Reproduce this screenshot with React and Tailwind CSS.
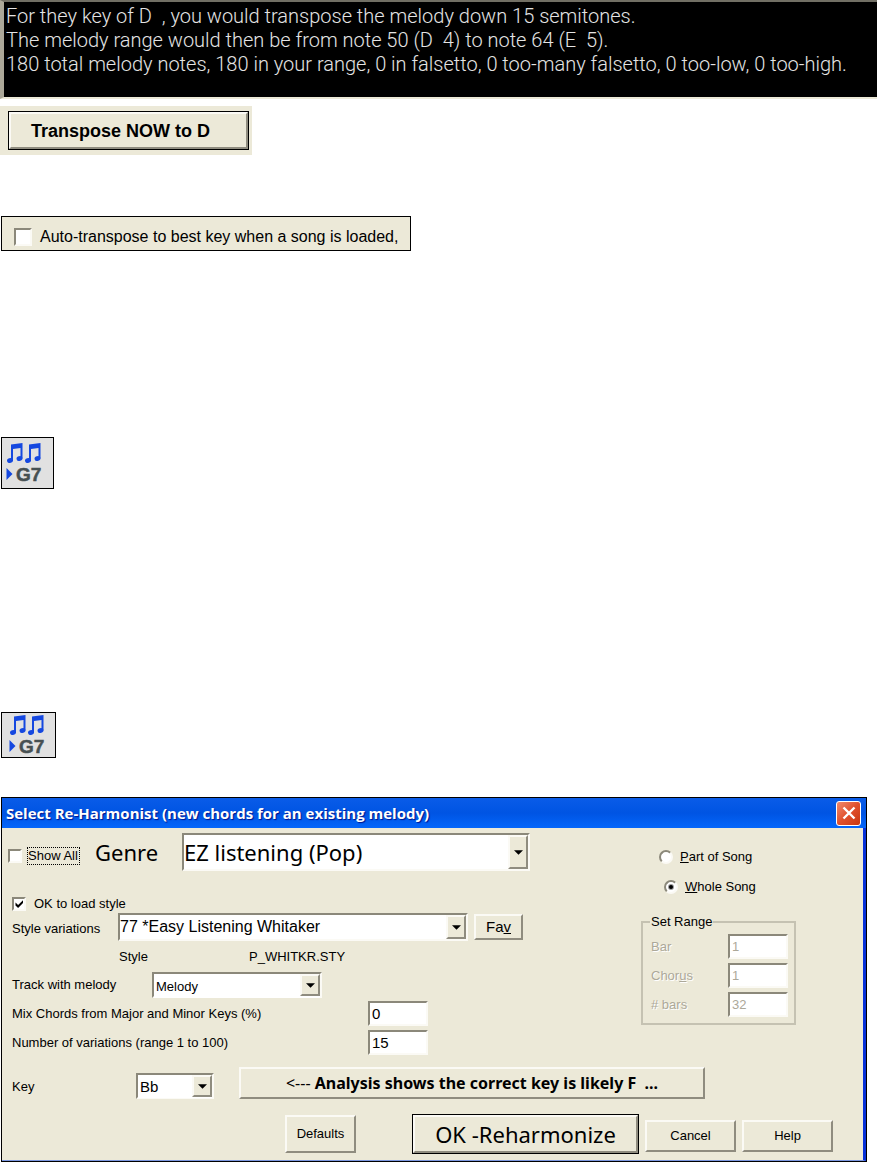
import React, { useState } from "react";
import clsx from "clsx";

const RAISED =
  "border-2 border-t-[#fbfaf5] border-l-[#fbfaf5] border-b-[#8f8c7f] border-r-[#8f8c7f] bg-[#ece9d8]";
const SUNKEN =
  "border-2 border-t-[#8b887a] border-l-[#8b887a] border-b-[#fbfaf5] border-r-[#fbfaf5] bg-white";

const LABEL = "text-[13px] leading-4 whitespace-pre";

function Checkbox({ checked, onChange, id, large }) {
  const size = large ? "h-[18px] w-[18px]" : "h-[14px] w-[14px]";

  return (
    <span className={clsx("relative inline-flex shrink-0", size)}>
      <input
        id={id}
        type="checkbox"
        checked={checked}
        onChange={(e) => onChange(e.target.checked)}
        className={clsx("appearance-none", size, SUNKEN)}
      />
      {checked ? (
        <svg
          viewBox="0 0 14 14"
          className={clsx("pointer-events-none absolute inset-0", size)}
        >
          <path d="M3.5 5.5v3l2.6 2.6 4.9-5V3.2l-4.900 4.900z" fill="#000" />
        </svg>
      ) : null}
    </span>
  );
}

function Radio({ id, checked, onChange }) {
  return (
    <span className="relative inline-flex h-[14px] w-[14px] shrink-0">
      <input
        id={id}
        type="radio"
        name="songPart"
        checked={checked}
        onChange={onChange}
        className={clsx("h-[14px] w-[14px] appearance-none rounded-full", SUNKEN)}
      />
      {checked ? (
        <span className="pointer-events-none absolute top-[5px] left-[5px] h-1 w-1 rounded-full bg-black ring-1 ring-black/40" />
      ) : null}
    </span>
  );
}

function ComboBox({ id, value, options, onChange, className, textClass }) {
  return (
    <div className={clsx("relative shrink-0", SUNKEN, className)}>
      <select
        id={id}
        value={value}
        onChange={(e) => onChange(e.target.value)}
        className={clsx("h-full w-full appearance-none bg-white text-black", textClass)}
      >
        {options.map((o) => (
          <option key={o} value={o}>
            {o}
          </option>
        ))}
      </select>
      <span
        className={clsx(
          "pointer-events-none absolute inset-y-0 right-0 flex w-5 items-center justify-center",
          RAISED,
        )}
      >
        <svg viewBox="0 0 10 5" className="h-[5px] w-[9px]">
          <path d="M0 0h10L5 5z" fill="#000" />
        </svg>
      </span>
    </div>
  );
}

function NumberBox({ id, value, onChange, disabled }) {
  return (
    <input
      id={id}
      type="text"
      value={value}
      disabled={disabled}
      onChange={(e) => onChange?.(e.target.value)}
      className={clsx(
        "h-[25px] w-[60px] shrink-0 pl-0.5",
        SUNKEN,
        disabled ? "text-[13px] text-[#aca899]" : "text-[15px] text-black",
      )}
    />
  );
}

function PushButton({ className, children }) {
  return (
    <button type="button" className={clsx("shrink-0 whitespace-pre", RAISED, className)}>
      {children}
    </button>
  );
}

function ReharmonizeButton({ className }) {
  return (
    <button
      type="button"
      aria-label="Reharmonize"
      className={clsx("flex items-center border border-black bg-[#e1e1e1]", className)}
    >
      <svg viewBox="0 0 40 42" className="h-[42px] w-10">
        <g fill="#1548e0">
          <path d="M7 2.500 18.500 1v15.500h-2V6L9 7v12H7z" />
          <ellipse cx="6" cy="18.500" rx="3" ry="2.400" transform="rotate(-20 6 18.500)" />
          <ellipse cx="15.500" cy="16.500" rx="3" ry="2.400" transform="rotate(-20 15.500 16.500)" />
          <path d="M25 2.500 36.500 1v15.500h-2V6L27 7v12h-2z" />
          <ellipse cx="24" cy="18.500" rx="3" ry="2.400" transform="rotate(-20 24 18.500)" />
          <ellipse cx="33.500" cy="16.500" rx="3" ry="2.400" transform="rotate(-20 33.500 16.500)" />
          <path d="M2.500 26v12l6-6z" />
        </g>
        <text
          x="12"
          y="39"
          fontFamily="Liberation Sans, Arial, sans-serif"
          fontSize="19"
          fontWeight="700"
          fill="#465052"
          stroke="#465052"
          strokeWidth="0.500"
        >
          G7
        </text>
      </svg>
    </button>
  );
}

function RangeRow({ id, label, value }) {
  return (
    <div className="flex items-center justify-between">
      <label
        htmlFor={id}
        className={clsx(LABEL, "text-[#aca899] [text-shadow:1px_1px_0_#fff]")}
      >
        {label}
      </label>
      <NumberBox id={id} value={value} disabled />
    </div>
  );
}

function ReHarmonistDialog() {
  const [showAll, setShowAll] = useState(false);
  const [loadStyle, setLoadStyle] = useState(true);
  const [genre, setGenre] = useState("EZ listening (Pop)");
  const [style, setStyle] = useState("77 *Easy Listening Whitaker");
  const [track, setTrack] = useState("Melody");
  const [mix, setMix] = useState("0");
  const [variations, setVariations] = useState("15");
  const [key, setKey] = useState("Bb");
  const [part, setPart] = useState("whole");

  return (
    <section className="mr-[10px] ml-px border border-black bg-[#ece9d8]">
      <header className="flex h-[30px] items-center justify-between bg-linear-to-b from-[#0a5ce8] via-[#0054e3] to-[#0466fb] pr-[5px] pl-1">
        <h1 className="font-['Open_Sans',sans-serif] text-[15px] leading-5 font-bold whitespace-pre text-white [text-shadow:1px_1px_1px_#00138c]">
          Select Re-Harmonist (new chords for an existing melody)
        </h1>
        <button
          type="button"
          aria-label="Close"
          className="flex h-[25px] w-[25px] items-center justify-center rounded-[3px] border border-white bg-linear-to-br from-[#f0896c] via-[#e0502c] to-[#c8360e]"
        >
          <svg viewBox="0 0 14 14" className="h-[14px] w-[14px]">
            <path d="M1.500 1.500l11 11M12.500 1.500l-11 11" stroke="#fff" strokeWidth="2.400" />
          </svg>
        </button>
      </header>

      <div className="border-r-[3px] border-b border-r-[#0831d9] border-b-[#7a96df] pt-[5px] pb-[6px] pl-[10px]">
        <div className="flex justify-between pr-[67px]">
          <div>
            <div className="-ml-1 flex h-[38px] items-center">
              <div className="flex items-center gap-1.5 pt-2">
                <Checkbox id="showAll" checked={showAll} onChange={setShowAll} />
                <label
                  htmlFor="showAll"
                  className={clsx(LABEL, "w-[51px] outline-1 outline-dotted outline-black")}
                >
                  Show All
                </label>
              </div>
              <label
                htmlFor="genre"
                className="ml-4 w-[87px] font-['Noto_Sans',sans-serif] text-[22px] leading-7"
              >
                Genre
              </label>
              <ComboBox
                id="genre"
                value={genre}
                options={["EZ listening (Pop)"]}
                onChange={setGenre}
                className="h-[38px] w-[348px]"
                textClass="font-['Noto_Sans',sans-serif] text-[22px] leading-7"
              />
            </div>

            <div className="mt-6 flex h-[18px] items-center gap-2">
              <Checkbox id="loadStyle" checked={loadStyle} onChange={setLoadStyle} />
              <label htmlFor="loadStyle" className={LABEL}>
                OK to load style
              </label>
            </div>

            <div className="flex h-[28px] items-center">
              <label htmlFor="style" className={clsx(LABEL, "w-[106px] pt-1")}>
                Style variations
              </label>
              <ComboBox
                id="style"
                value={style}
                options={["77 *Easy Listening Whitaker"]}
                onChange={setStyle}
                className="h-[28px] w-[350px]"
                textClass="text-base leading-5"
              />
              <PushButton className="ml-1.5 h-[26px] w-[49px] text-[15px] leading-4">
                Fa<u>v</u>
              </PushButton>
            </div>

            <div className="flex h-[31px] items-center pl-[107px]">
              <span className={clsx(LABEL, "w-[130px]")}>Style</span>
              <span className={LABEL}>P_WHITKR.STY</span>
            </div>

            <div className="flex h-[26px] items-center">
              <label htmlFor="track" className={clsx(LABEL, "w-[140px]")}>
                Track with melody
              </label>
              <ComboBox
                id="track"
                value={track}
                options={["Melody"]}
                onChange={setTrack}
                className="h-[26px] w-[170px]"
                textClass="pl-0.5 text-[13px] leading-4"
              />
            </div>

            <div className="mt-[3px] flex items-center">
              <label htmlFor="mix" className={clsx(LABEL, "w-[356px]")}>
                Mix Chords from Major and Minor Keys (%)
              </label>
              <NumberBox id="mix" value={mix} onChange={setMix} />
            </div>
            <div className="mt-1 flex items-center">
              <label htmlFor="variations" className={clsx(LABEL, "w-[356px]")}>
                Number of variations (range 1 to 100)
              </label>
              <NumberBox id="variations" value={variations} onChange={setVariations} />
            </div>
          </div>

          <div className="w-[155px] pt-4">
            <div className="ml-[18px] flex items-center gap-[7px]">
              <Radio id="part" checked={part === "part"} onChange={() => setPart("part")} />
              <label htmlFor="part" className={LABEL}>
                <u>P</u>art of Song
              </label>
            </div>
            <div className="mt-[14px] ml-[23px] flex items-center gap-[7px]">
              <Radio id="whole" checked={part === "whole"} onChange={() => setPart("whole")} />
              <label htmlFor="whole" className={LABEL}>
                <u>W</u>hole Song
              </label>
            </div>
            <fieldset className="mt-[19px] border-2 border-[#c5c2b2] pr-1.5 pb-1.5 pl-2">
              <legend className={clsx(LABEL, "-ml-px px-px")}>Set Range</legend>
              <div className="flex flex-col gap-1 pt-1">
                <RangeRow id="bar" label="Bar" value="1" />
                <RangeRow
                  id="chorus"
                  label={
                    <>
                      Chor<u>u</u>s
                    </>
                  }
                  value="1"
                />
                <RangeRow id="bars" label="# bars" value="32" />
              </div>
            </fieldset>
          </div>
        </div>

        <div className="mt-3 flex items-end">
          <label htmlFor="key" className={clsx(LABEL, "w-[124px] pb-1")}>
            Key
          </label>
          <ComboBox
            id="key"
            value={key}
            options={["Bb"]}
            onChange={setKey}
            className="h-[26px] w-[78px]"
            textClass="pl-0.5 text-[15px] leading-4"
          />
          <PushButton className="ml-[25px] h-8 w-[466px] font-['Noto_Sans',sans-serif] text-base leading-5 font-bold">
            <span className="font-normal">{"<--- "}</span>
            {"Analysis shows the correct key is likely F  ..."}
          </PushButton>
        </div>

        <div className="mt-[15px] flex items-center justify-end pr-[30px]">
          <PushButton className={clsx(LABEL, "h-[38px] w-[71px]")}>Defaults</PushButton>
          <div className="ml-14 border border-black">
            <PushButton className="block h-[38px] w-[225px] font-['Noto_Sans',sans-serif] text-[22px] leading-7">
              OK -Reharmonize
            </PushButton>
          </div>
          <PushButton className={clsx(LABEL, "mt-1 ml-1.5 h-8 w-[91px]")}>Cancel</PushButton>
          <PushButton className={clsx(LABEL, "mt-1 ml-1.5 h-8 w-[91px]")}>Help</PushButton>
        </div>
      </div>
    </section>
  );
}

export default function App() {
  const [autoTranspose, setAutoTranspose] = useState(false);

  return (
    <main className="bg-white font-['Liberation_Sans',Arial,sans-serif] text-black">
      <div className="border-y-2 border-l-4 border-t-[#716f64] border-b-[#ece9d8] border-l-[#aca899] bg-black pt-0.5 pb-[21px] pl-0.5 font-[Roboto,Arial,sans-serif] text-xl leading-6 font-light whitespace-pre text-[#e4e4e4]">
        <p>{"For they key of D  , you would transpose the melody down 15 semitones."}</p>
        <p>{"The melody range would then be from note 50 (D  4) to note 64 (E  5)."}</p>
        <p>
          180 total melody notes, 180 in your range, 0 in falsetto, 0 too-many falsetto, 0 too-low,
          0 too-high.
        </p>
      </div>

      <div className="mt-[7px] w-[252px] bg-[#ece9d8] px-2 py-[5px]">
        <div className="w-[241px] border border-black">
          <PushButton className="block h-[37px] w-full pl-5 text-left text-lg leading-5 font-bold">
            Transpose NOW to D
          </PushButton>
        </div>
      </div>

      <div className="mt-[61px] ml-px flex h-[35px] w-[410px] items-center gap-2 border border-black bg-[#ece9d8] pt-1.5 pl-3">
        <Checkbox id="autoTranspose" large checked={autoTranspose} onChange={setAutoTranspose} />
        <label htmlFor="autoTranspose" className="text-base leading-5 whitespace-pre">
          Auto-transpose to best key when a song is loaded,
        </label>
      </div>

      <ReharmonizeButton className="mt-[186px] ml-px h-[52px] w-[53px] pl-0.5" />
      <ReharmonizeButton className="mt-[223px] mb-[39px] ml-px h-[46px] w-[55px] pl-[5px]" />

      <ReHarmonistDialog />
    </main>
  );
}
